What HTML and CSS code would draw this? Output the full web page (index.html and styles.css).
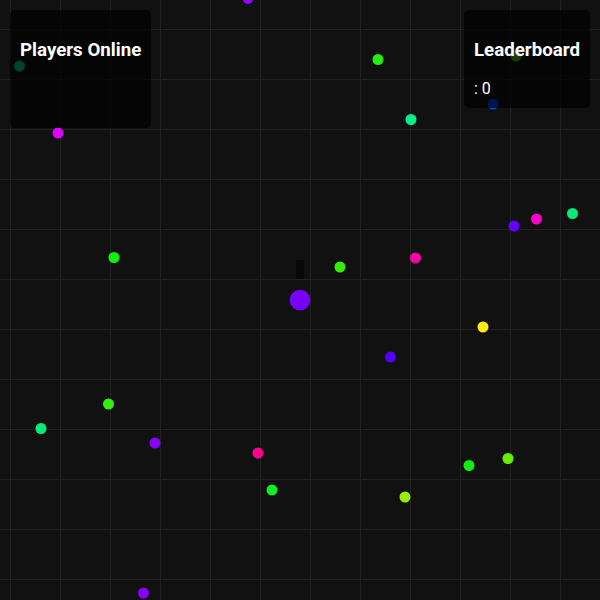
FILE: index.html
```html
<!DOCTYPE html>
<html lang="en">
<head>
	<meta charset="UTF-8">
	<title>game</title>
	<link rel="stylesheet" href="styles.css">
</head>
<body>
	<svg class="world" width="600" height="600" viewBox="0 0 600 600">
		<circle cx="248" cy="-1" r="5" fill="#9900ff"/>
		<circle cx="19.5" cy="66" r="5.5" fill="#00e090"/>
		<circle cx="58" cy="133" r="5.5" fill="#dd00ff"/>
		<circle cx="378" cy="59.5" r="5.5" fill="#22ee11"/>
		<circle cx="411" cy="119.5" r="5.5" fill="#00f08a"/>
		<circle cx="516" cy="56" r="5.5" fill="#55cc00"/>
		<circle cx="493" cy="104" r="5.5" fill="#0044ff"/>
		<circle cx="572.5" cy="213.5" r="5.5" fill="#00ee77"/>
		<circle cx="536.5" cy="219" r="5.5" fill="#ff00cc"/>
		<circle cx="514" cy="226" r="5.5" fill="#6600ff"/>
		<circle cx="114" cy="257.5" r="5.5" fill="#11ee11"/>
		<circle cx="340" cy="267" r="5.5" fill="#33ee00"/>
		<circle cx="415.5" cy="258" r="5.5" fill="#ff00aa"/>
		<circle cx="483" cy="327" r="5.5" fill="#ffee00"/>
		<circle cx="390.5" cy="357" r="5.5" fill="#5500ff"/>
		<circle cx="108.5" cy="404" r="5.5" fill="#33ee11"/>
		<circle cx="41" cy="428.5" r="5.5" fill="#00ee77"/>
		<circle cx="155" cy="443" r="5.5" fill="#8800ff"/>
		<circle cx="258" cy="453" r="5.5" fill="#ff0088"/>
		<circle cx="272" cy="490" r="5.5" fill="#11ee22"/>
		<circle cx="405" cy="497" r="5.5" fill="#99ee00"/>
		<circle cx="469" cy="465.5" r="5.5" fill="#11ee11"/>
		<circle cx="508" cy="458.5" r="5.5" fill="#66ee00"/>
		<circle cx="143.5" cy="593" r="5.5" fill="#8800ff"/>
		<!-- player -->
		<rect x="296" y="260" width="8" height="19" fill="rgba(0,0,0,.5)"/>
		<circle cx="300" cy="300" r="10.3" fill="#7700ff"/>
	</svg>

	<div class="panel players">
		<h3>Players Online</h3>
		<div class="list"></div>
	</div>

	<div class="panel leaderboard">
		<h3>Leaderboard</h3>
		<div class="list">: 0</div>
	</div>
</body>
</html>
```

FILE: styles.css
```css
*{
  padding: 0;
  margin: 0;
}

body{
  width: 600px;
  height: 600px;
  overflow: hidden;
  position: relative;
  background-color: #111;
  background-image:
    linear-gradient(to right, #222 1px, transparent 1px),
    linear-gradient(to bottom, #222 1px, transparent 1px);
  background-size: 50px 50px;
  background-position: 10px 29px;
  font-family: Roboto, "Liberation Sans", sans-serif;
  color: #fff;
}

.world{
  position: absolute;
  left: 0;
  top: 0;
}

.panel{
  position: absolute;
  top: 10px;
  padding: 0 10px 10px;
  background: rgba(0, 0, 0, .7);
  border-radius: 5px;
}

.panel h3{
  font-size: 1.17em;
  font-weight: 700;
  margin: 1em 0;
  padding-top: 10px;
}

.panel .list{
  font-size: 16px;
}

.players{
  left: 10px;
  height: 108px;
}

.leaderboard{
  right: 10px;
}
```
